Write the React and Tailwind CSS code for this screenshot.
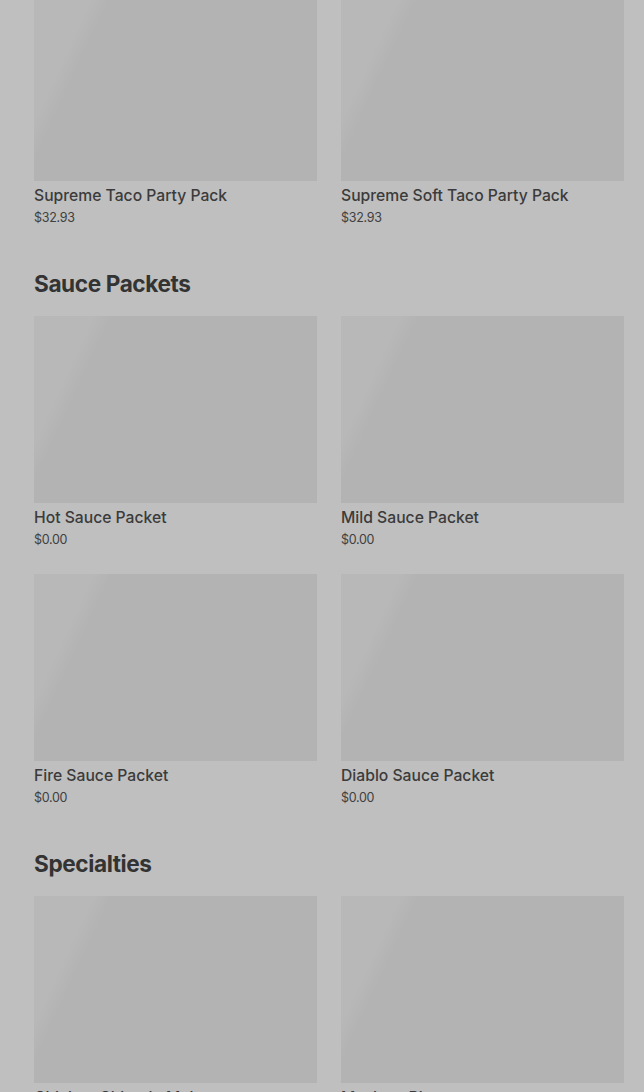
import React from 'react';

const sections = [
  {
    title: null,
    items: [
      { name: 'Supreme Taco Party Pack', price: '$32.93' },
      { name: 'Supreme Soft Taco Party Pack', price: '$32.93' },
    ],
  },
  {
    title: 'Sauce Packets',
    items: [
      { name: 'Hot Sauce Packet', price: '$0.00' },
      { name: 'Mild Sauce Packet', price: '$0.00' },
      { name: 'Fire Sauce Packet', price: '$0.00' },
      { name: 'Diablo Sauce Packet', price: '$0.00' },
    ],
  },
  {
    title: 'Specialties',
    items: [
      { name: 'Chicken Chipotle Melt', price: '$0.00' },
      { name: 'Mexican Pizza', price: '$0.00' },
    ],
  },
];

const ProductCard = ({ item }) => (
  <div className="flex flex-col">
    <div className="h-[187px] w-full bg-[linear-gradient(115deg,#b8b8b8_0%,#b8b8b8_16%,#b3b3b3_21%,#b3b3b3_100%)]" />
    <p className="mt-[3px] text-[15.7px] leading-6 font-medium text-[#3b3b3b] whitespace-nowrap">{item.name}</p>
    <p className="text-[12.5px] leading-5 text-[#404040] tracking-[-0.3px]">{item.price}</p>
  </div>
);

export default function App() {
  return (
    <div className="min-h-[1092px] bg-[#bfbfbf] pl-[34px] pr-[20px] overflow-hidden font-['Inter',_'Noto_Sans',_sans-serif]">
      <div className="-mt-[6px]">
        {sections.map((sec, idx) => (
          <section key={idx} className={idx === 0 ? '' : 'pt-10'}>
            {sec.title && (
              <h2 className="mb-4 text-[22.6px] leading-8 font-bold text-[#333333] tracking-[-0.4px]">{sec.title}</h2>
            )}
            <div className="grid grid-cols-2 gap-x-6 gap-y-6">
              {sec.items.map((item, i) => (
                <ProductCard key={i} item={item} />
              ))}
            </div>
          </section>
        ))}
      </div>
    </div>
  );
}
